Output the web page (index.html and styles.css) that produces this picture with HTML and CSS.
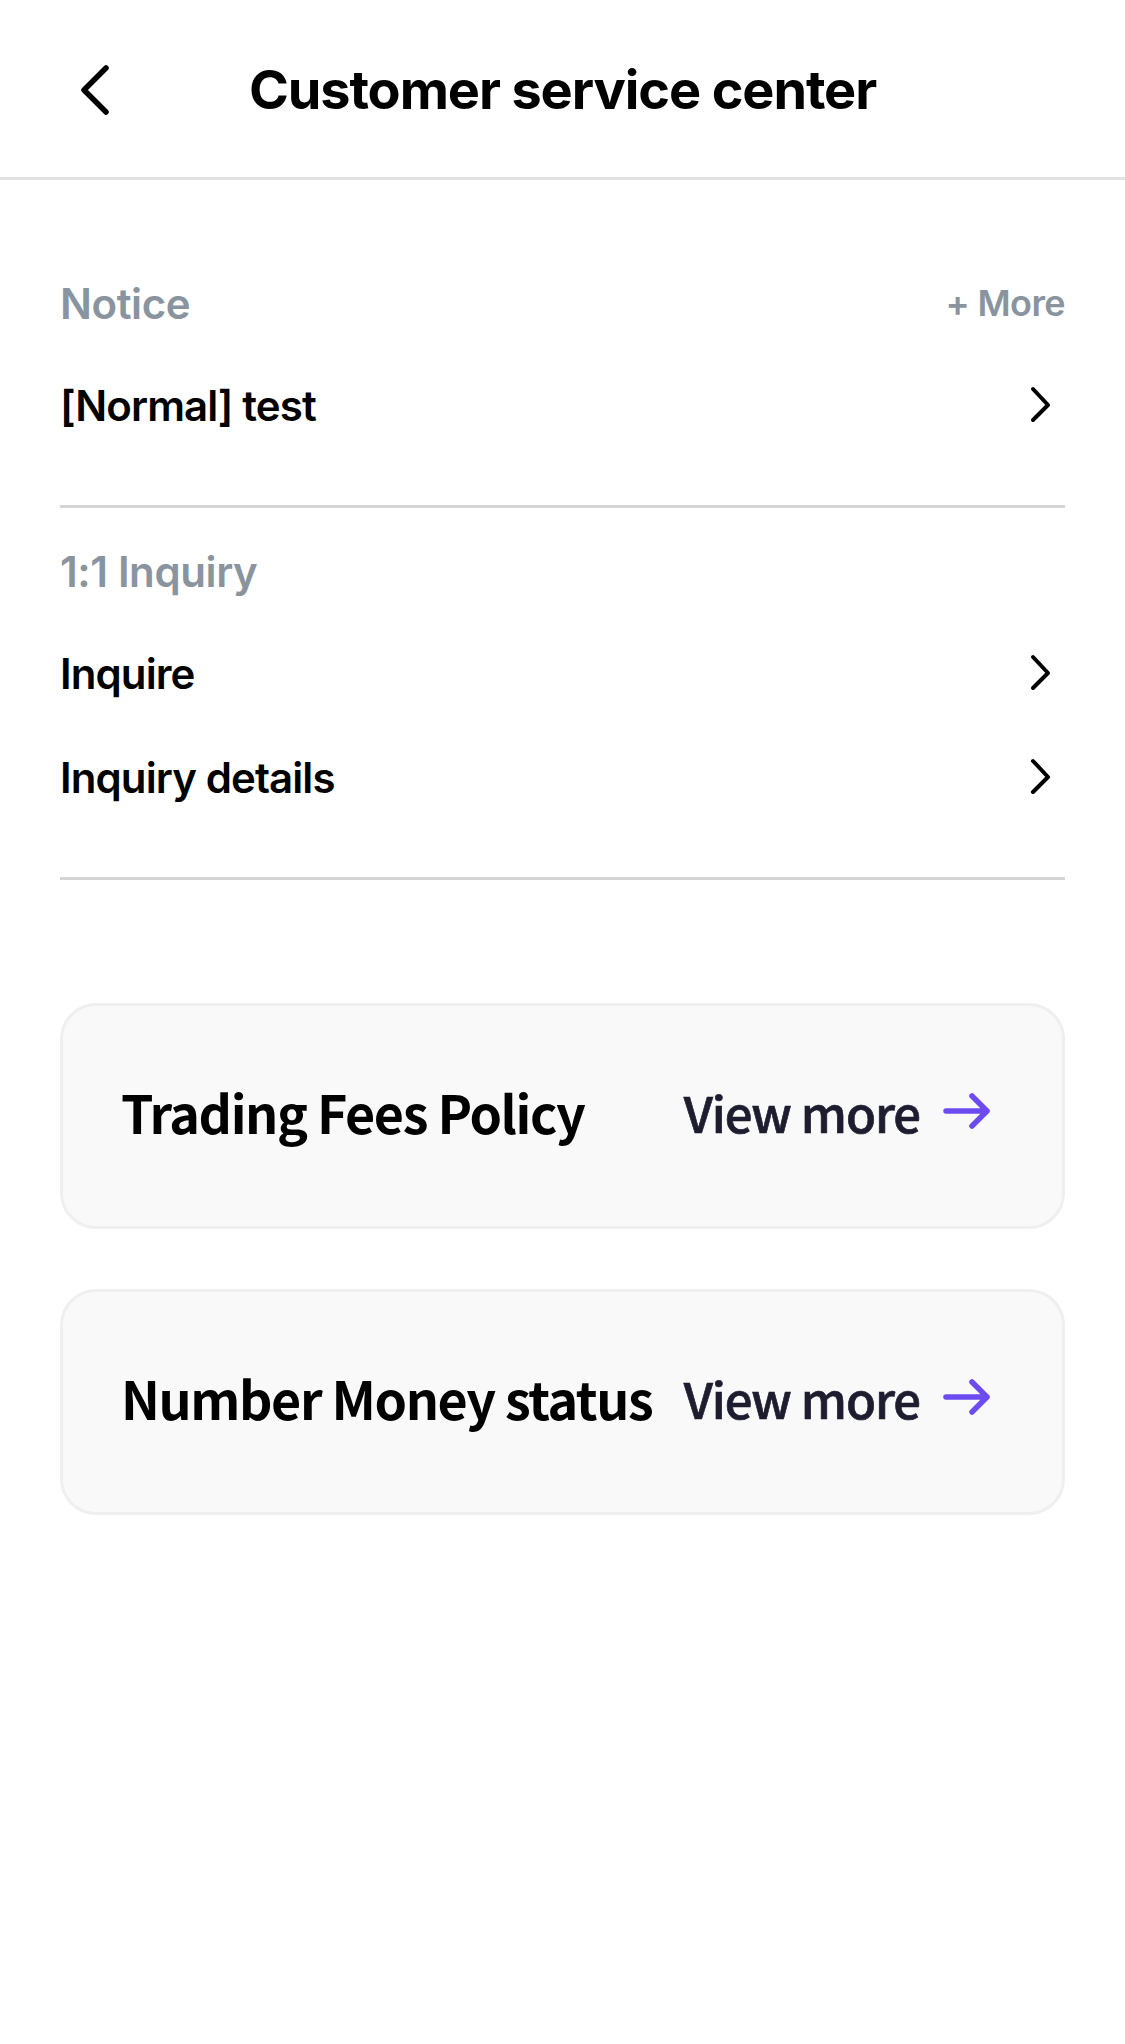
FILE: index.html
```html
<!DOCTYPE html>
<html lang="en">
<head>
<meta charset="utf-8">
<title>Customer service center</title>
<link rel="stylesheet" href="styles.css">
</head>
<body>
<header class="topbar">
  <button class="back" aria-label="Back">
    <svg width="40" height="60" viewBox="0 0 40 60"><path d="M34 8 L12 30 L34 52" fill="none" stroke="#000" stroke-width="5.5" stroke-linecap="round" stroke-linejoin="round"/></svg>
  </button>
  <h1 class="title">Customer service center</h1>
</header>
<main class="content">
  <section class="section">
    <div class="sec-head">
      <span class="sec-title">Notice</span>
      <span class="more">+ More</span>
    </div>
    <div class="item"><span>[Normal] test</span><svg class="chev" width="24" height="40" viewBox="0 0 24 40"><path d="M5 4 L20 20 L5 35" fill="none" stroke="#000" stroke-width="4" stroke-linecap="round" stroke-linejoin="round"/></svg></div>
  </section>
  <section class="section">
    <div class="sec-head">
      <span class="sec-title">1:1 Inquiry</span>
    </div>
    <div class="item"><span>Inquire</span><svg class="chev" width="24" height="40" viewBox="0 0 24 40"><path d="M5 4 L20 20 L5 35" fill="none" stroke="#000" stroke-width="4" stroke-linecap="round" stroke-linejoin="round"/></svg></div>
    <div class="item"><span>Inquiry details</span><svg class="chev" width="24" height="40" viewBox="0 0 24 40"><path d="M5 4 L20 20 L5 35" fill="none" stroke="#000" stroke-width="4" stroke-linecap="round" stroke-linejoin="round"/></svg></div>
  </section>
  <div class="cards">
    <div class="card">
      <span class="card-title">Trading Fees Policy</span>
      <span class="view">View more
        <svg class="arrow" width="50" height="40" viewBox="0 0 50 40"><path d="M4 20 H45 M30 5 L45 20 L30 35" fill="none" stroke="#6c4cf1" stroke-width="5.5" stroke-linecap="round" stroke-linejoin="round"/></svg>
      </span>
    </div>
    <div class="card">
      <span class="card-title">Number Money status</span>
      <span class="view">View more
        <svg class="arrow" width="50" height="40" viewBox="0 0 50 40"><path d="M4 20 H45 M30 5 L45 20 L30 35" fill="none" stroke="#6c4cf1" stroke-width="5.5" stroke-linecap="round" stroke-linejoin="round"/></svg>
      </span>
    </div>
  </div>
</main>
</body>
</html>
```
FILE: styles.css
```css
* { box-sizing: border-box; }
html, body { margin: 0; padding: 0; background: #fff; }
body {
  font-family: Inter, "Noto Sans", "Liberation Sans", sans-serif;
  color: #000;
  width: 1125px;
  min-height: 2044px;
}
.topbar {
  height: 180px;
  border-bottom: 3px solid #e2e2e2;
  display: flex;
  align-items: center;
  justify-content: center;
  position: relative;
}
.back {
  position: absolute;
  left: 72px;
  top: 60px;
  background: none;
  border: 0;
  padding: 0;
  width: 40px;
  height: 60px;
  display: flex;
}
.title {
  margin: 0;
  font-size: 54px;
  font-weight: 700;
  letter-spacing: -1.1px;
  line-height: 60px;
  margin-top: 3px;
}
.content {
  padding: 60px 60px 0;
}
.section {
  padding: 33px 0 48px;
  border-bottom: 3px solid #d4d4d4;
}
.sec-head {
  height: 60px;
  display: flex;
  align-items: center;
  justify-content: space-between;
  margin-bottom: 20px;
}
.sec-title {
  font-size: 42px;
  font-weight: 600;
  color: #8a949e;
  letter-spacing: -0.4px;
}
.more {
  font-size: 36px;
  font-weight: 600;
  color: #8a949e;
  letter-spacing: -0.6px;
}
.item {
  height: 104px;
  display: flex;
  align-items: center;
  justify-content: space-between;
  font-size: 42px;
  font-weight: 600;
  letter-spacing: -0.9px;
}
.chev { margin-right: 13px; }
.cards {
  padding-top: 123px;
  display: flex;
  flex-direction: column;
  gap: 60px;
}
.card {
  height: 226px;
  border: 3px solid #efefef;
  border-radius: 36px;
  background: #f9f9f9;
  display: flex;
  align-items: center;
  justify-content: space-between;
  padding: 0 60px 10px 58px;
  font-family: "Noto Sans CJK KR", "Noto Sans", sans-serif;
  white-space: nowrap;
}
.card-title {
  font-size: 52px;
  font-weight: 700;
  color: #000;
  letter-spacing: -1.4px;
}
.view {
  display: flex;
  align-items: center;
  flex-shrink: 0;
  font-size: 49px;
  font-weight: 500;
  color: #1e1d2f;
  letter-spacing: -1.1px;
  -webkit-text-stroke: 0.7px #1e1d2f;
}
.arrow { margin-left: 22px; margin-right: 10px; }
```
